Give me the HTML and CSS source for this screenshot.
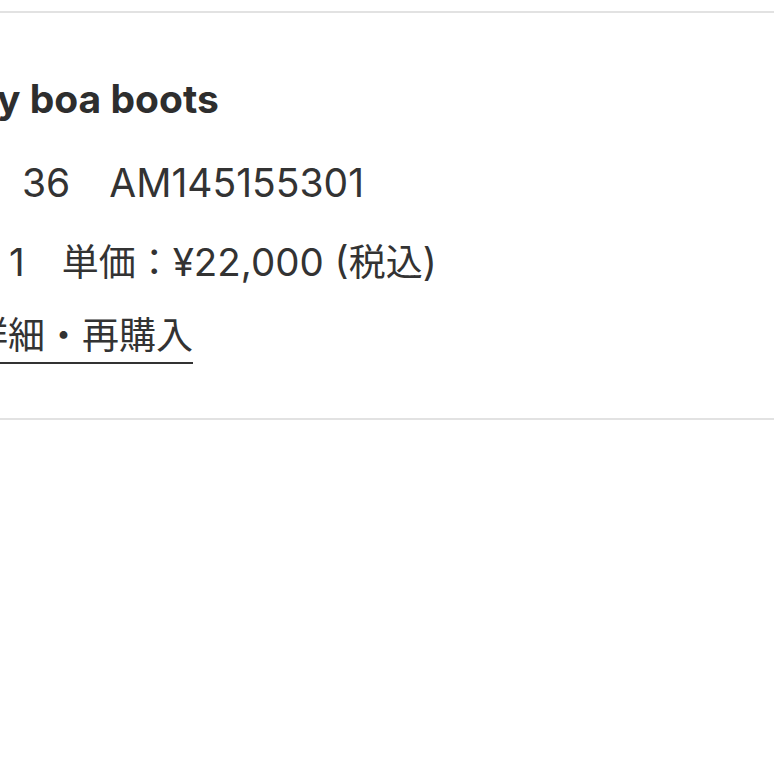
FILE: index.html
```html
<!DOCTYPE html>
<html lang="ja">
<head>
<meta charset="utf-8">
<link rel="stylesheet" href="styles.css">
</head>
<body>
<div class="page">
  <section class="order-item">
    <div class="item-body">
      <h2 class="item-name">y boa boots</h2>
      <p class="item-spec line-size">36　AM145155301</p>
      <p class="item-spec line-qty">1<span class="ja">　単価：</span>¥22,000 (<span class="ja">税込</span>)</p>
      <p class="item-link-row"><a class="item-link" href="#">詳細・再購入</a></p>
    </div>
  </section>
</div>
</body>
</html>
```
FILE: styles.css
```css
html, body {
  margin: 0;
  padding: 0;
  background: #fff;
  overflow: hidden;
}
.page {
  width: 774px;
  height: 774px;
  padding-top: 11px;
  box-sizing: border-box;
}
.order-item {
  border-top: 2px solid #e2e2e2;
  border-bottom: 2px solid #e2e2e2;
  height: 409px;
  box-sizing: border-box;
  overflow: hidden;
}
.item-body {
  margin-left: -29px;
  font-family: "Inter", "Noto Sans CJK JP", sans-serif;
  color: #333;
  font-size: 39px;
}
.ja {
  font-size: 37px;
}
.item-name {
  margin: 0;
  padding-left: 26px;
  padding-top: 60px;
  font-size: 39px;
  font-weight: 700;
  line-height: 52px;
  color: #2e2e2e;
}
.item-spec {
  margin: 0;
  line-height: 52px;
}
.line-size {
  padding-left: 51px;
  margin-top: 32px;
}
.line-qty {
  padding-left: 38px;
  margin-top: 27px;
  font-size: 38.5px;
}
.item-link-row {
  margin: 20px 0 0;
  line-height: 52px;
}
.item-link {
  display: inline-block;
  color: #333;
  text-decoration: none;
  font-size: 37px;
  line-height: 53px;
  border-bottom: 2px solid #333;
}
```
